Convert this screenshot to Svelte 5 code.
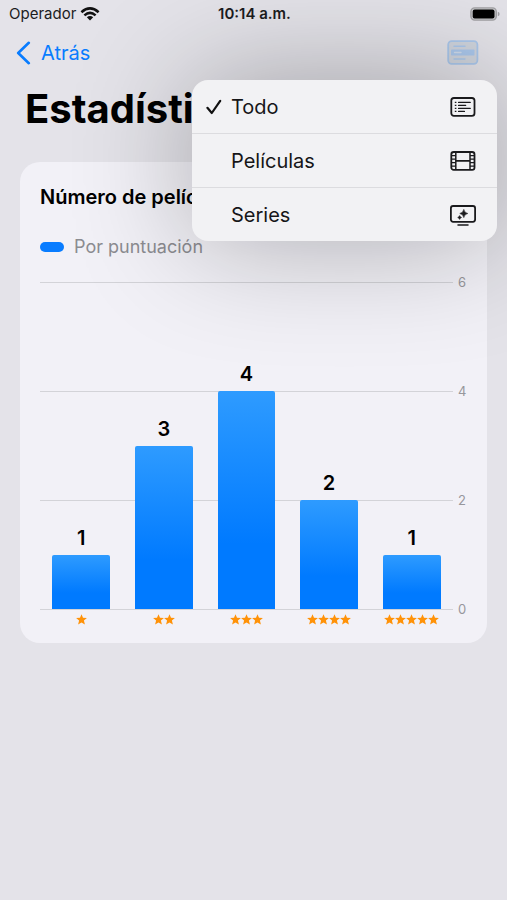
<script>
  const bars = [
    { stars: 1, value: 1 },
    { stars: 2, value: 3 },
    { stars: 3, value: 4 },
    { stars: 4, value: 2 },
    { stars: 5, value: 1 }
  ];
  const max = 6;
  const ticks = [6, 4, 2, 0];
  const options = [
    { id: 'all', label: 'Todo' },
    { id: 'films', label: 'Películas' },
    { id: 'series', label: 'Series' }
  ];
  let selected = $state('all');
</script>

<div class="screen">
  <header class="status">
    <div class="carrier">
      <span>Operador</span>
      <svg width="20" height="14" viewBox="0 0 20 14" aria-hidden="true">
        <g fill="none" stroke="#111" stroke-width="2.5">
          <path d="M1.4 5.2Q10-2.4 18.6 5.2" />
          <path d="M4.4 8.4Q10 3.4 15.6 8.4" />
        </g>
        <path d="M6.8 10.2Q10 7.6 13.2 10.2L10 13.6Z" fill="#111" />
      </svg>
    </div>
    <time>10:14 a.m.</time>
    <div class="battery">
      <svg width="30" height="14" viewBox="0 0 30 14" aria-hidden="true">
        <rect x="0.9" y="0.9" width="25.4" height="12.2" rx="3.8" fill="#c8c8cb" stroke="#a0a0a3" stroke-width="1.4" />
        <rect x="2.7" y="2.6" width="21.8" height="8.8" rx="2" fill="#000" />
        <path d="M27.8 4.8Q29.6 5.3 29.6 7T27.8 9.2Z" fill="#a0a0a3" />
      </svg>
    </div>
  </header>

  <nav>
    <a href="#back">
      <svg width="15" height="24" viewBox="0 0 15 24" aria-hidden="true">
        <path d="M12.8 1.8L2.2 12L12.8 22.2" fill="none" stroke="#087cff" stroke-width="2.6" stroke-linecap="round" stroke-linejoin="round" />
      </svg>
      <span>Atrás</span>
    </a>
    <div class="filter">
      <button class="trigger" aria-label="Filtrar" aria-expanded="true">
        <svg width="32" height="25" viewBox="0 0 32 25" aria-hidden="true">
          <rect x="1.2" y="1.2" width="29.2" height="22.6" rx="3.5" fill="#d0d5de" stroke="#abc8ec" stroke-width="1.8" />
          <rect x="4" y="9.5" width="23.5" height="6" rx="0.8" fill="#abc8ec" />
          <path d="M7 6.2H18M7 19H18" stroke="#abc8ec" stroke-width="1.4" stroke-linecap="round" />
          <path d="M7.5 12.5H14" stroke="#d0dcec" stroke-width="1.4" stroke-linecap="round" />
        </svg>
      </button>
      <div class="menu" role="menu">
        {#each options as option}
          <button
            role="menuitemradio"
            aria-checked={selected === option.id}
            onclick={() => (selected = option.id)}
          >
            <span class="check">
              {#if selected === option.id}
                <svg width="16" height="16" viewBox="0 0 16 16" aria-hidden="true">
                  <path d="M1.4 8.8L5.8 14L14.2 1.8" fill="none" stroke="#111" stroke-width="2.2" stroke-linecap="round" stroke-linejoin="round" />
                </svg>
              {/if}
            </span>
            <span class="label">{option.label}</span>
            <svg width="26" height="22" viewBox="0 0 26 22" fill="none" stroke="#1a1a1c" stroke-width="1.8" aria-hidden="true">
              {#if option.id === 'all'}
                <rect x="1.3" y="2" width="23.2" height="17.8" rx="2.6" />
                <path d="M8.6 6.4H20.2M8.6 9.4H15.6M8.6 12.4H20.2M8.6 15.4H14.4" stroke-width="1.4" stroke-linecap="round" />
                <path d="M4.8 6.4H6.4M4.8 9.4H6.4M4.8 12.4H6.4M4.8 15.4H6.4" stroke-width="1.4" />
              {:else if option.id === 'films'}
                <rect x="1.3" y="2" width="23.2" height="17.8" rx="2.4" />
                <path d="M5.8 2V19.8M20 2V19.8" stroke-width="1.5" />
                <path d="M5.8 10.9H20" stroke-width="1.7" />
                <path d="M1.3 5.6H5.8M1.3 9.1H5.8M1.3 12.7H5.8M1.3 16.2H5.8M20 5.6H24.5M20 9.1H24.5M20 12.7H24.5M20 16.2H24.5" stroke-width="1.3" />
              {:else}
                <rect x="0.9" y="2" width="24.2" height="15.8" rx="2.2" />
                <path d="M8 20.9H18" stroke-linecap="round" stroke-width="1.5" />
                <path d="M13.8 5.4Q14.4 8.9 17.8 9.5Q14.4 10.1 13.8 13.6Q13.2 10.1 9.8 9.5Q13.2 8.9 13.8 5.4Z" fill="#1a1a1c" stroke-width="0.6" />
                <path d="M9.6 11.6Q10 13.1 11.5 13.5Q10 13.9 9.6 15.4Q9.2 13.9 7.7 13.5Q9.2 13.1 9.6 11.6Z" fill="#1a1a1c" stroke-width="0.6" />
              {/if}
            </svg>
          </button>
        {/each}
      </div>
    </div>
  </nav>

  <main>
    <h1>Estadísticas</h1>
    <section class="card">
      <h2>Número de películas</h2>
      <div class="legend"><i></i><span>Por puntuación</span></div>
      <div class="chart">
        <div class="grid">
          {#each ticks as tick}
            <div class="tick"><hr /><span>{tick}</span></div>
          {/each}
        </div>
        <div class="bars">
          {#each bars as bar}
            <div class="column">
              <strong>{bar.value}</strong>
              <div class="bar" style="height: {(bar.value / max) * 100}%"></div>
            </div>
          {/each}
        </div>
      </div>
      <div class="ratings">
        {#each bars as bar}
          <div class="rating" role="img" aria-label="{bar.stars} de 5">
            {#each Array(bar.stars) as _}
              <svg width="11" height="11" viewBox="0 0 11 11" aria-hidden="true">
                <path d="M5.5 0.2L7 3.8L10.9 4.1L7.9 6.6L8.9 10.4L5.5 8.4L2.1 10.4L3.1 6.6L0.1 4.1L4 3.8Z" fill="#ff9208" />
              </svg>
            {/each}
          </div>
        {/each}
      </div>
    </section>
  </main>
</div>

<style>
  :global(body) {
    margin: 0;
    background: #e4e3e9;
  }
  .screen {
    min-height: 100vh;
    overflow: hidden;
    background: #e4e3e9;
    color: #000;
    font-family: Inter, 'Liberation Sans', sans-serif;
  }
  .screen * {
    box-sizing: border-box;
  }
  svg {
    display: block;
    flex: none;
  }
  button {
    padding: 0;
    border: 0;
    background: none;
    color: inherit;
    font: inherit;
    text-align: left;
  }
  .status {
    display: grid;
    grid-template-columns: 1fr auto 1fr;
    align-items: center;
    height: 27px;
    padding: 0 7px 0 9px;
    font-size: 15px;
    color: #1c1c1e;
  }
  .carrier {
    display: flex;
    align-items: center;
    gap: 4px;
  }
  .status time {
    font-weight: 600;
  }
  .battery {
    display: flex;
    justify-content: flex-end;
  }
  nav {
    display: flex;
    align-items: center;
    justify-content: space-between;
    height: 51px;
    padding: 0 28px 0 16px;
  }
  nav a {
    display: flex;
    align-items: center;
    gap: 10px;
    color: #087cff;
    font-size: 20px;
    text-decoration: none;
  }
  .filter {
    position: relative;
    padding-top: 4px;
  }
  .menu {
    position: absolute;
    z-index: 2;
    top: 44px;
    right: -18px;
    width: 305px;
    overflow: hidden;
    border-radius: 16px;
    background: #f2f2f4;
    box-shadow: 0 0 120px rgba(0, 0, 0, 0.3);
  }
  .menu button {
    display: flex;
    align-items: center;
    width: 100%;
    height: 53px;
    padding: 0 21px 0 14px;
    color: #161618;
    font-size: 20px;
  }
  .menu button + button {
    height: 54px;
    border-top: 1px solid #dcdcdf;
  }
  .check {
    width: 25px;
  }
  .label {
    flex: 1;
  }
  main {
    padding: 0 20px;
  }
  h1 {
    margin: 0;
    padding: 6px 5px 28px;
    font-size: 40px;
    line-height: 50px;
    font-weight: 700;
  }
  .card {
    padding: 20px 20px 18px;
    border-radius: 20px;
    background: #f2f1f7;
  }
  h2 {
    margin: 0;
    font-size: 20px;
    line-height: 30px;
    font-weight: 600;
  }
  .legend {
    display: flex;
    align-items: center;
    gap: 10px;
    margin: 21px 0;
    color: #8c8c91;
    font-size: 18px;
    line-height: 28px;
  }
  .legend i {
    width: 24px;
    height: 10px;
    border-radius: 5px;
    background: #087cff;
  }
  .chart {
    position: relative;
    height: 327px;
  }
  .grid {
    display: flex;
    flex-direction: column;
    justify-content: space-between;
    height: 100%;
  }
  .tick {
    display: flex;
    align-items: center;
    gap: 5px;
    height: 0;
    color: #97979c;
    font-size: 13px;
  }
  .tick hr {
    flex: 1;
    height: 1px;
    margin: 0;
    border: 0;
    background: #d3d3d8;
  }
  .tick span {
    width: 9px;
  }
  .bars {
    position: absolute;
    inset: 0 14px 0 0;
    display: flex;
  }
  .column {
    flex: 1;
    display: flex;
    flex-direction: column;
    align-items: center;
    justify-content: flex-end;
  }
  .column strong {
    font-size: 20px;
    line-height: 24px;
    font-weight: 600;
    margin-bottom: 5px;
  }
  .bar {
    flex: none;
    width: 70%;
    border-radius: 2px 2px 0 0;
    background: linear-gradient(#2e9bff, #007aff 70%);
  }
  .ratings {
    display: flex;
    padding: 5px 14px 0 0;
  }
  .rating {
    flex: 1;
    display: flex;
    justify-content: center;
  }
</style>
